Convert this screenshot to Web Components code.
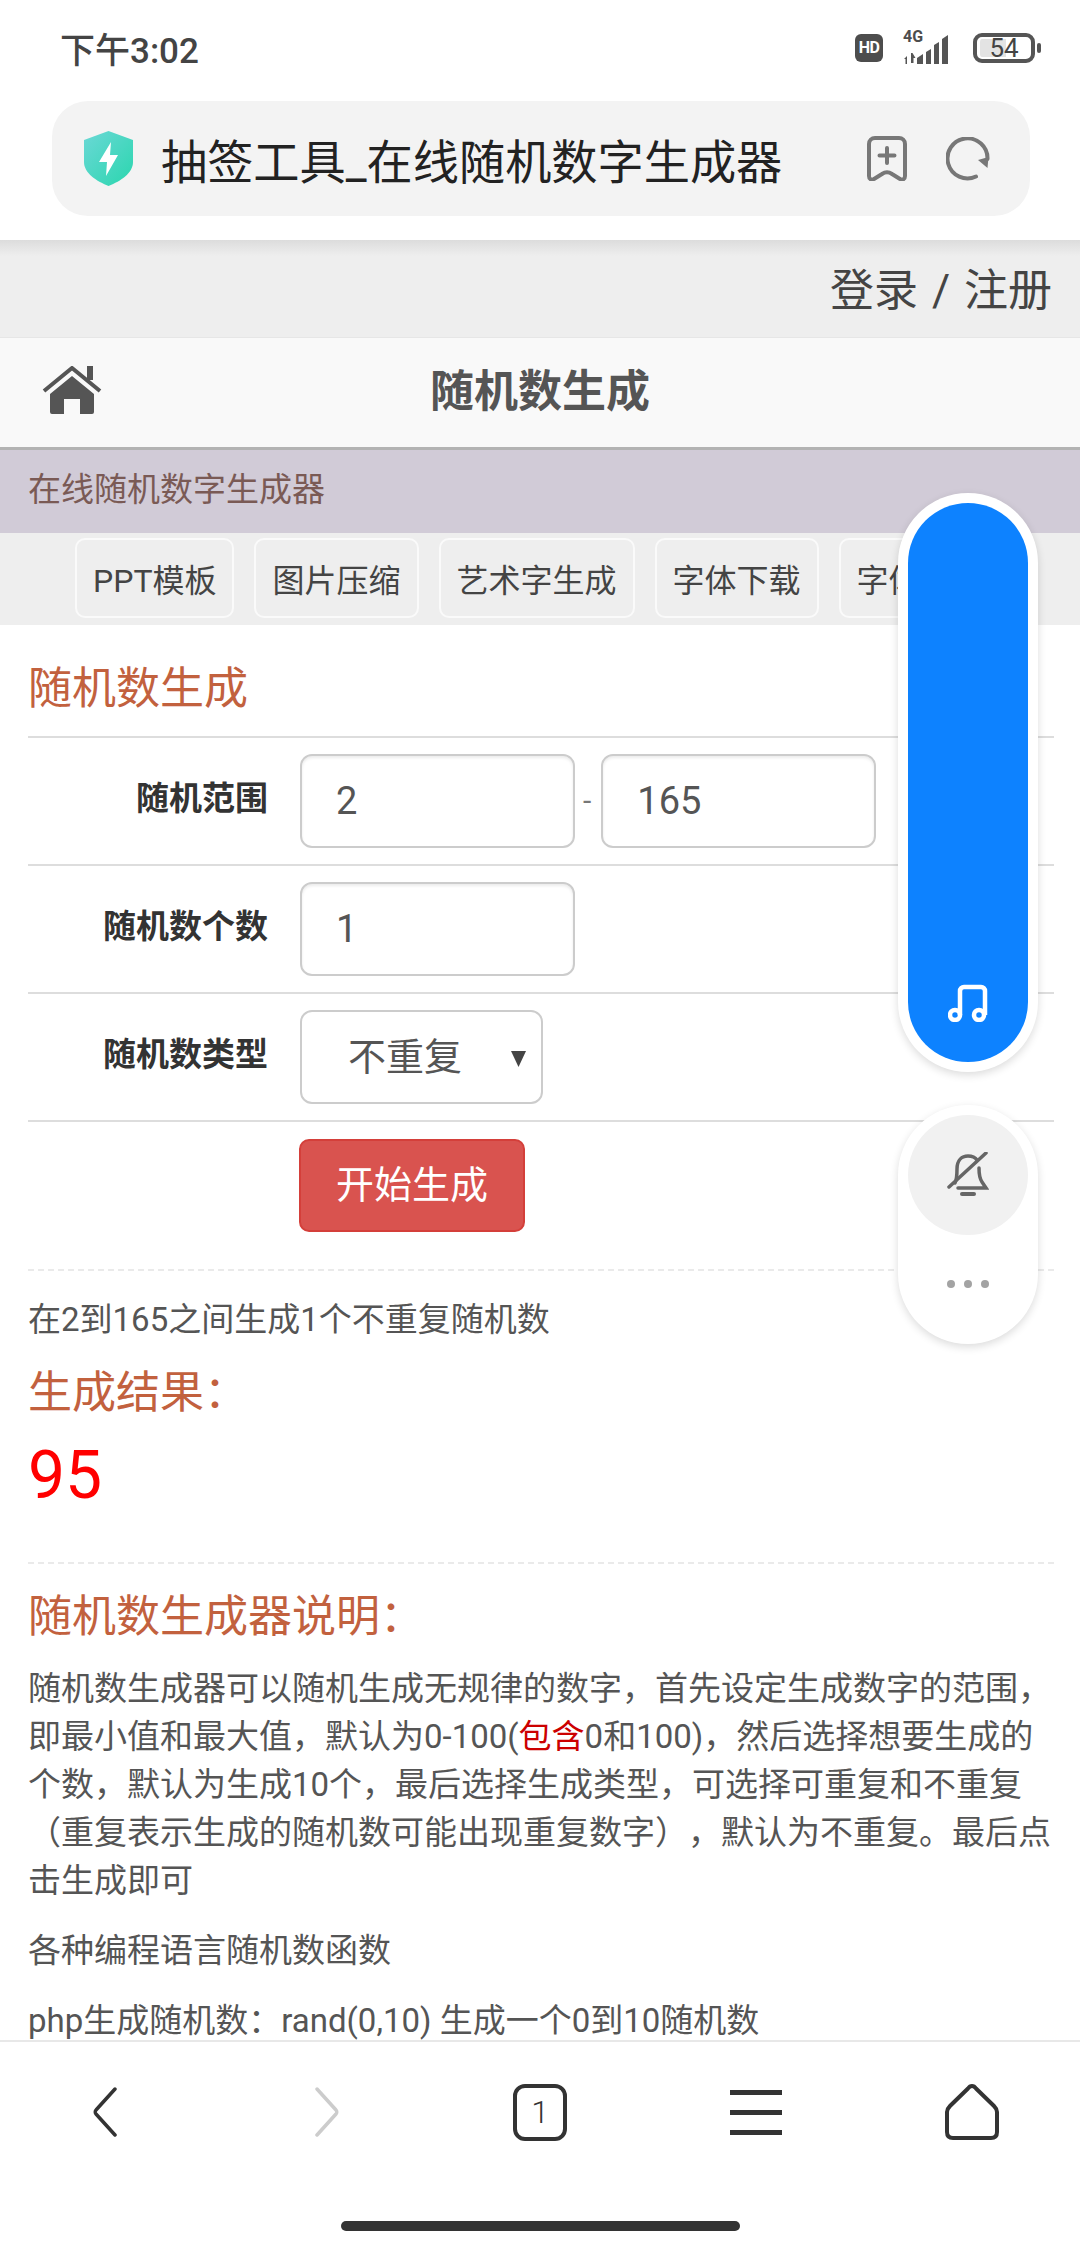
<!DOCTYPE html>
<html lang="zh-CN"><head><meta charset="utf-8"><title>随机数生成</title>
<style>
html,body{margin:0;padding:0;background:#fff}
body{width:1080px;height:2248px;overflow:hidden;position:relative;display:flex;flex-direction:column;font-family:Roboto,"Noto Sans CJK SC",sans-serif;color:#555;text-spacing-trim:space-all}
</style></head><body>
<phone-chrome></phone-chrome>
<site-top></site-top>
<site-nav></site-nav>
<site-sub>在线随机数字生成器</site-sub>
<tab-strip><tab-chip>PPT模板</tab-chip><tab-chip>图片压缩</tab-chip><tab-chip>艺术字生成</tab-chip><tab-chip>字体下载</tab-chip><tab-chip>字体转换</tab-chip></tab-strip>
<page-main></page-main>
<bottom-nav></bottom-nav>
<float-panel></float-panel>
<script>
function def(name,html){customElements.define(name,class extends HTMLElement{constructor(){super();this.attachShadow({mode:'open'}).innerHTML=html}})}
def('phone-chrome',`<style>
:host{display:block;height:240px;flex:none;background:#fff;position:relative;z-index:2}
.st{height:100px;display:flex;align-items:center;padding:0 39px 4px 60px;box-sizing:border-box}
.time{font-size:35px;font-weight:500;color:#444;flex:1;margin-top:-2px}
.hd{width:28px;height:28px;border-radius:6px;background:#4d4d4d;color:#fff;font:700 16px/28px Roboto,sans-serif;text-align:center;letter-spacing:-.5px}
.sig{position:relative;width:54px;height:32px;margin:0 16px 0 20px}
.g{position:absolute;left:0;top:-3px;font:700 16px/15px Roboto,sans-serif;color:#4d4d4d}
.sig svg{position:absolute;left:0;top:0}
.bat{width:62px;height:30px;box-sizing:border-box;border:4px solid #555;border-radius:9px;font:400 26px/18px Roboto,sans-serif;color:#444;text-align:center;background:linear-gradient(90deg,#e3e3e3 0 55%,#fff 55%);background-origin:content-box;background-clip:content-box;padding:2px 3px}
.nub{width:4px;height:10px;border-radius:2px;background:#555;margin-left:2px}
.addr{margin:1px 50px 0 52px;height:115px;border-radius:36px;background:#f3f3f3;display:flex;align-items:center;padding:0 40px 0 32px}
.t{font-size:46.200px;color:#222;margin-left:28px;flex:1;white-space:nowrap}
.addr svg{flex:none}
</style>
<div class="st"><span class="time">下午3:02</span><span class="hd">HD</span>
<span class="sig"><span class="g">4G</span><svg width="54" height="32" viewBox="0 0 54 32"><path d="M1 27l3-3v8H2.500V27zM8 31V21h1.500l3 5h-2v5zM14 32v-6l6-4v10zM23 32V20l5-3v15zM31 32V13l5-3v22zM39 32V7l6-4v29z" fill="#555"/></svg></span>
<span class="bat">54</span><span class="nub"></span></div>
<div class="addr"><svg width="49" height="55" viewBox="0 0 49 55"><defs><linearGradient id="s" x1="0" y1="0" x2="1" y2="1"><stop offset="0" stop-color="#6bd8d6"/><stop offset="1" stop-color="#2ad6ae"/></linearGradient></defs><path d="M24.500 0L49 9v22c0 11-12 19-24.500 24C12 50 0 42 0 31V9z" fill="url(#s)"/><path d="M27 11L15 31h8l-1 14 12-21h-8z" fill="#fff"/></svg>
<span class="t">抽签工具_在线随机数字生成器</span>
<svg width="40" height="45" viewBox="0 0 40 45" fill="none" stroke="#777" stroke-width="4" stroke-linejoin="round" stroke-linecap="round"><path d="M8 2h24a6 6 0 0 1 6 6v32c0 4-3 4-5 3l-8-5c-3-2-7-2-10 0l-8 5c-2 1-5 1-5-3V8a6 6 0 0 1 6-6z"/><path d="M20 12v15M12.500 19.500h15"/></svg>
<svg style="margin-left:39px" width="44" height="44" viewBox="0 0 44 44" fill="none"><path d="M30 39.500A20 20 0 1 1 41.500 22" stroke="#777" stroke-width="4" stroke-linecap="round"/><path d="M32 23l10.500-3-1 11z" fill="#777"/></svg></div>`);
def('site-top',`<style>:host{display:flex;flex:none;height:97px;background:linear-gradient(#dcdcdc,#eee 16px);justify-content:flex-end;align-items:center;padding:0 28px 3px 0;font-size:44px;color:#444;box-sizing:border-box;white-space:pre;word-spacing:3px}</style>登录 / 注册`);
def('site-nav',`<style>:host{display:flex;flex:none;height:113px;box-sizing:border-box;background:#f9f9f9;border-bottom:3px solid #b3b3b3;border-top:1px solid #e6e6e6;align-items:center;justify-content:center;position:relative;font-size:44px;font-weight:700;color:#555}
svg{position:absolute;left:42px;top:28px}span{margin-top:-10px}</style>
<svg width="60" height="48" viewBox="0 0 60 48"><path d="M2 25L30 2l28 23" fill="none" stroke="#555" stroke-width="4"/><path d="M45 0h6v14h-6z" fill="#555"/><path d="M8 28L30 10l22 18v18a2 2 0 0 1-2 2H38V33H22v15H10a2 2 0 0 1-2-2z" fill="#555"/></svg><span>随机数生成</span>`);
def('site-sub',`<style>:host{display:flex;flex:none;align-items:center;height:83px;box-sizing:border-box;padding:0 0 10px 28px;background:#d1cbd7;color:#7a5a55;font-size:33px}</style><slot></slot>`);
def('tab-strip',`<style>:host{display:flex;flex:none;height:92px;box-sizing:border-box;padding:5px 0 0 75px;gap:20px;background:#eee;overflow:hidden}</style><slot></slot>`);
def('tab-chip',`<style>:host{display:flex;flex:none;align-items:center;height:80px;box-sizing:border-box;padding:0 16px;background:#eee;border:2px solid #fafafa;border-radius:10px;font-size:32px;color:#444;white-space:nowrap}</style><slot></slot>`);
def('form-row',`<style>:host{display:flex;height:128px;box-sizing:border-box;border-bottom:2px solid #ddd;padding-top:16px}
.l{width:240px;flex:none;height:94px;line-height:90px;text-align:right;font-size:33px;font-weight:700;color:#333;margin-right:32px}
.c{display:flex;align-items:flex-start}</style><div class="l"><slot name="label"></slot></div><div class="c"><slot></slot></div>`);
def('text-box',`<style>:host{display:flex;align-items:center;width:275px;height:94px;box-sizing:border-box;border:2px solid #ccc;border-radius:12px;padding-left:34px;font-size:38px;color:#555;background:#fff;box-shadow:inset 0 2px 3px rgba(0,0,0,.08)}</style><slot></slot>`);
def('select-box',`<style>:host{display:flex;align-items:center;width:243px;height:94px;box-sizing:border-box;border:2px solid #ccc;border-radius:12px;padding:0 0 8px 46px;font-size:38px;color:#555;background:#fff;position:relative}
svg{position:absolute;right:15px;top:39px}</style><slot></slot><svg width="15" height="16" viewBox="0 0 15 16"><path d="M0 0h15L7.500 16z" fill="#444"/></svg>`);
def('page-main',`<style>
:host{display:block;flex:1;min-height:0;overflow:hidden;background:#fff;padding:0 26px 0 28px}
h2{margin:0;font-weight:400;font-size:44px;line-height:60px;color:#c2613e}
.h1{height:113px;box-sizing:border-box;border-bottom:2px solid #ddd;padding-top:34px}
.btnrow{height:149px;box-sizing:border-box;padding:17px 0 0 272px;border-bottom:2px dashed #eaeaea}
.btn{display:flex;width:226px;height:93px;box-sizing:border-box;padding-bottom:8px;margin-left:-1px;align-items:center;justify-content:center;background:#d9534f;border:2px solid #d43f3a;border-radius:10px;color:#fff;font-size:38px}
.dash{color:#777;margin:0 10px 0 8px;font-size:30px;line-height:94px}
.p{margin:0 0 22px;font-size:33px;line-height:48px;color:#555;white-space:nowrap}
.desc{margin:25px 0 19px}
.num{font-size:66px;line-height:80px;color:#f00;margin-top:13px;padding-bottom:46px;border-bottom:2px dashed #eaeaea;margin-bottom:23px}
.r{color:#c00}
.h3{margin-bottom:18px}
</style>
<h2 class="h1">随机数生成</h2>
<form-row><span slot="label">随机范围</span><text-box>2</text-box><span class="dash">-</span><text-box>165</text-box></form-row>
<form-row><span slot="label">随机数个数</span><text-box>1</text-box></form-row>
<form-row><span slot="label">随机数类型</span><select-box>不重复</select-box></form-row>
<div class="btnrow"><div class="btn">开始生成</div></div>
<div class="p desc">在2到165之间生成1个不重复随机数</div>
<h2>生成结果：</h2>
<div class="num">95</div>
<h2 class="h3">随机数生成器说明：</h2>
<div class="p"><div>随机数生成器可以随机生成无规律的数字，首先设定生成数字的范围，</div><div>即最小值和最大值，默认为0-100(<span class="r">包含</span>0和100)，然后选择想要生成的</div><div>个数，默认为生成10个，最后选择生成类型，可选择可重复和不重复</div><div>（重复表示生成的随机数可能出现重复数字），默认为不重复。最后点</div><div>击生成即可</div></div>
<div class="p">各种编程语言随机数函数</div>
<div class="p">php生成随机数：rand(0,10) 生成一个0到10随机数</div>`);
def('bottom-nav',`<style>
:host{display:block;flex:none;height:208px;box-sizing:border-box;background:#fff;border-top:2px solid #e8e8e8;position:relative}
.r{display:flex;align-items:center;height:140px}
.i{flex:none;display:flex;justify-content:center;width:216px}
.tab{width:54px;height:57px;box-sizing:border-box;border:4px solid #333;border-radius:12px;display:flex;align-items:center;justify-content:center;font:300 32px Roboto,sans-serif;color:#333}
.bar{width:399px;height:10px;border-radius:5px;background:#333;margin:39px auto 0}
</style><div class="r">
<div class="i"><svg style="margin-left:-6px" width="26" height="50" viewBox="0 0 26 50" fill="none" stroke="#333" stroke-width="3.500" stroke-linecap="round" stroke-linejoin="round"><path d="M23 2L4 23c-1 1-1 3 0 4l19 21"/></svg></div>
<div class="i"><svg style="margin-left:6px" width="26" height="50" viewBox="0 0 26 50" fill="none" stroke="#ccc" stroke-width="3.500" stroke-linecap="round" stroke-linejoin="round"><path d="M3 2l19 21c1 1 1 3 0 4L3 48"/></svg></div>
<div class="i"><div class="tab">1</div></div>
<div class="i"><svg width="54" height="45" viewBox="0 0 54 45"><path d="M1 0h52v5H1zM1 20h52v5H1zM1 40h52v5H1z" fill="#333"/></svg></div>
<div class="i"><svg width="56" height="58" viewBox="0 0 56 58" fill="none" stroke="#333" stroke-width="4" stroke-linejoin="round"><path d="M28 3c1.500 0 3 1 4 2.500L50 23c2 2 3 4 3 6v20c0 4-2 6-6 6H9c-4 0-6-2-6-6V29c0-2 1-4 3-6L24 5.500C25 4 26.500 3 28 3z"/></svg></div>
</div><div class="bar"></div>`);
def('float-panel',`<style>
:host{position:absolute;left:898px;top:493px;width:140px;display:flex;flex-direction:column;gap:33px;z-index:5}
.a,.b{background:#fff;border-radius:70px;box-shadow:0 3px 8px rgba(0,0,0,.14);padding:10px;box-sizing:border-box}
.a{height:579px}.in{height:559px;border-radius:60px;background:#0d82ff;display:flex;align-items:flex-end;justify-content:center;padding-bottom:40px;box-sizing:border-box}
.b{height:239px;display:flex;flex-direction:column;align-items:center}
.c{width:120px;height:120px;border-radius:50%;background:#f1f1f1;display:flex;align-items:center;justify-content:center;flex:none}
.d{display:flex;gap:9px;margin-top:45px}.d i{width:8px;height:8px;border-radius:50%;background:#a3a3a3}
</style>
<div class="a"><div class="in"><svg width="40" height="38" viewBox="0 0 40 38" fill="none" stroke="#fff" stroke-width="4.500" stroke-linejoin="round"><path d="M12 31V7a4 4 0 0 1 4-4h17a4 4 0 0 1 4 4v24"/><circle cx="7" cy="31" r="5"/><circle cx="31" cy="31" r="5"/></svg></div></div>
<div class="b"><div class="c"><svg width="42" height="46" viewBox="0 0 42 46" fill="none" stroke="#666" stroke-width="3.500" stroke-linecap="round"><path d="M8 31c2-4 2-8 2-14C10 8 15 4 21 4c4 0 7 1 9 4M32 16c0 7 1 11 3 14l4 6H11"/><path d="M39 1L2 35"/><path d="M15 42h12" stroke-width="4"/></svg></div><div class="d"><i></i><i></i><i></i></div></div>`);
</script>
</body></html>
